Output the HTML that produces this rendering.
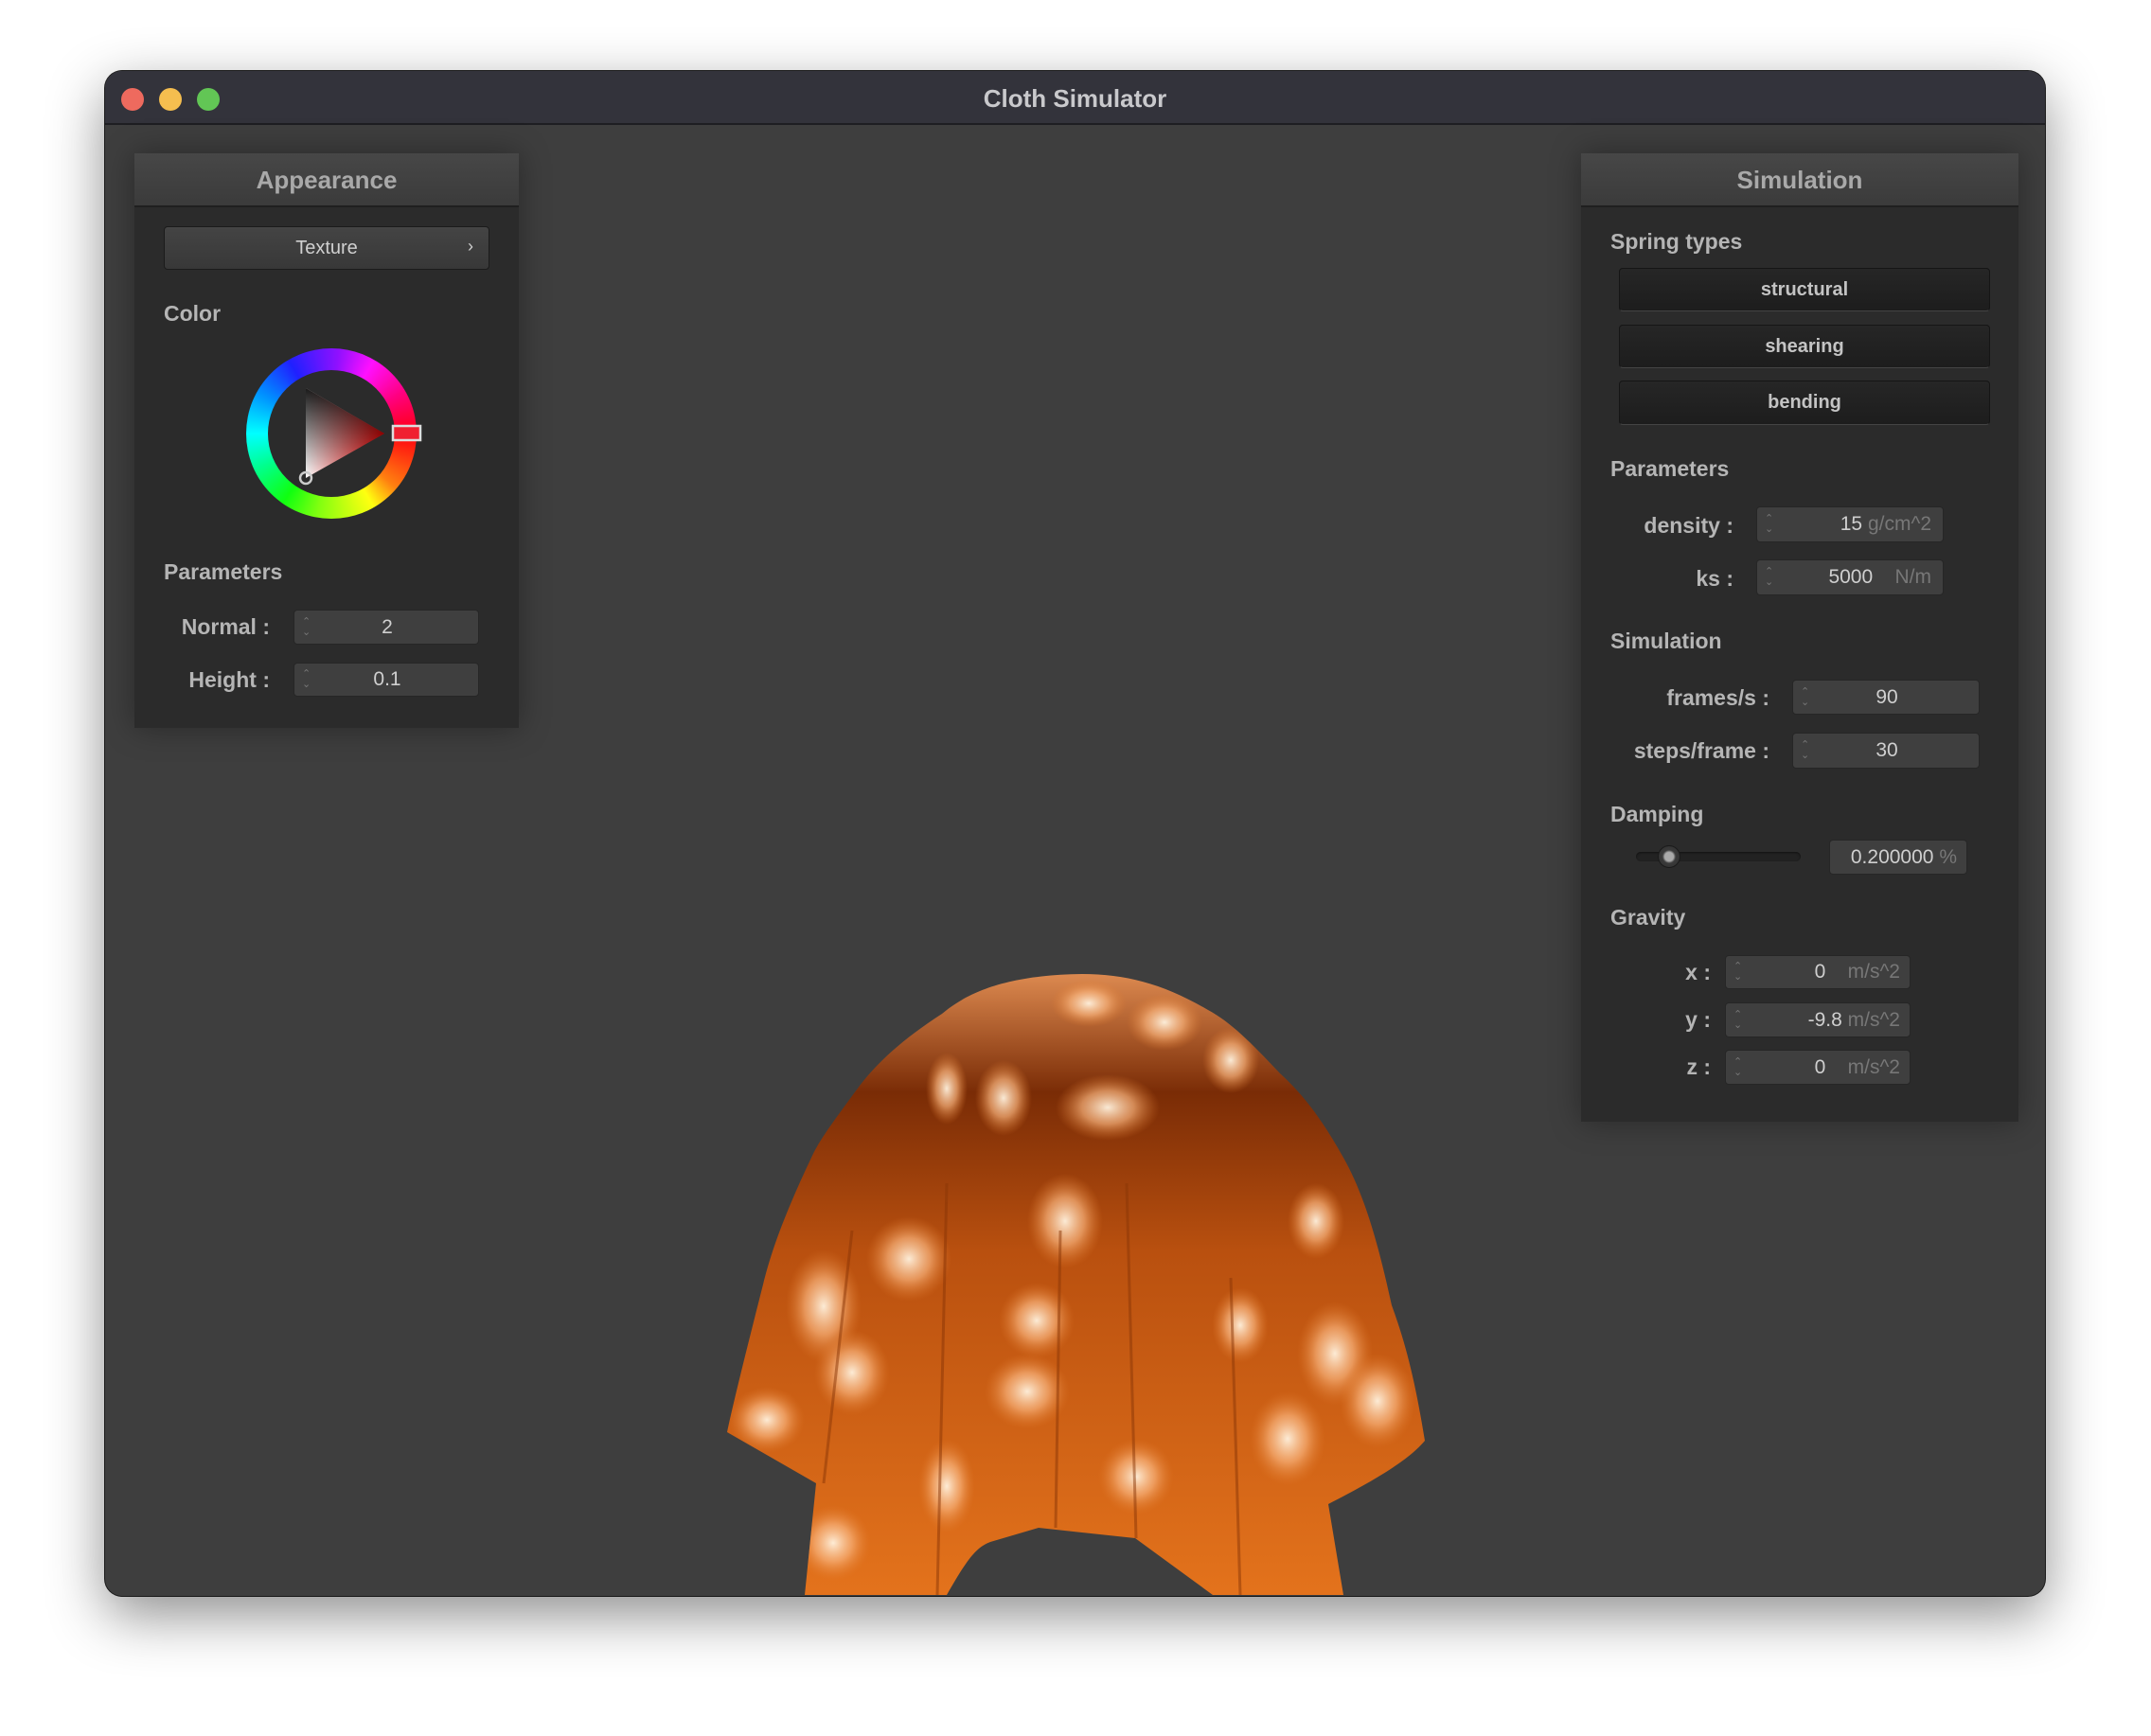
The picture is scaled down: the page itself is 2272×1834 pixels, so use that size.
<!DOCTYPE html>
<html><head><meta charset="utf-8"><style>
*{margin:0;padding:0;box-sizing:border-box}
body{width:2272px;height:1834px;background:#fff;position:relative;overflow:hidden;font-family:"Liberation Sans",sans-serif}
.win{position:absolute;left:111px;top:75px;width:2049px;height:1611px;border-radius:18px;background:#3e3e3e;overflow:hidden;box-shadow:0 20px 60px rgba(0,0,0,.45),0 0 0 1px #222}
.tb{position:absolute;left:0;top:0;width:100%;height:57px;background:#33333b;border-bottom:2px solid #1e1e22}
.tl{position:absolute;top:18px;width:24px;height:24px;border-radius:50%}
.title{position:absolute;left:0;width:100%;top:14px;text-align:center;color:#c9c9cc;font-weight:bold;font-size:26px}
.p{position:absolute;background:#2b2b2b;box-shadow:0 0 30px rgba(0,0,0,.35)}
.ph{position:absolute;left:0;top:0;width:100%;height:57px;background:linear-gradient(#474747,#3b3b3b);border-bottom:2px solid #1f1f1f;text-align:center;line-height:56px;font-size:26px;font-weight:bold;color:#a9a9a9}
.a{position:absolute}
.lab{position:absolute;font-size:23px;font-weight:bold;color:#b5b5b5}
.rl{position:absolute;font-size:23px;font-weight:bold;color:#b5b5b5;text-align:right}
.f{position:absolute;background:#3f3f3f;border:1px solid #262626;border-radius:4px;color:#cfcfcf;font-size:21px}
.f .s{position:absolute;left:8px;top:50%;transform:translateY(-50%);color:#777;font-size:11px;line-height:11px}
.f .v{position:absolute;top:50%;transform:translateY(-50%)}
.u{color:#777}
.btn{position:absolute;background:linear-gradient(#262626,#1d1d1d);border:1px solid #151515;border-bottom-color:#444;border-radius:4px;color:#c4c4c4;font-size:20px;font-weight:bold;text-align:center}
</style></head><body>
<div class="win">
 <div class="tb">
  <div class="tl" style="left:17px;background:#ee6a5e"></div>
  <div class="tl" style="left:57px;background:#f5be4f"></div>
  <div class="tl" style="left:97px;background:#62c655"></div>
  <div class="title">Cloth Simulator</div>
 </div>

 <svg class="a" style="left:0;top:0" width="2049" height="1611" viewBox="111 75 2049 1611">
  <defs>
   <linearGradient id="cg" x1="0" y1="0" x2="0" y2="1">
    <stop offset="0" stop-color="#e39055"/><stop offset=".2" stop-color="#7a2c06"/><stop offset=".45" stop-color="#b9500f"/><stop offset="1" stop-color="#e4731c"/>
   </linearGradient>
   <radialGradient id="bl"><stop offset="0" stop-color="#fff3e0" stop-opacity=".95"/><stop offset=".5" stop-color="#f8b27a" stop-opacity=".7"/><stop offset="1" stop-color="#e07a2c" stop-opacity="0"/></radialGradient>
   <clipPath id="cc"><path d="M1143 1029 C1060 1030 1020 1050 995 1071 C950 1100 925 1125 908 1147 C880 1185 865 1205 857 1223 C830 1280 815 1320 806 1357 C790 1420 775 1480 768 1513 L862 1567 L850 1685 L1000 1685 C1020 1650 1030 1635 1046 1629 L1097 1614 L1199 1625 L1281 1685 L1419 1685 L1403 1589 C1460 1560 1490 1540 1505 1522 C1495 1460 1485 1420 1470 1379 C1455 1310 1440 1260 1419 1223 C1395 1180 1375 1155 1352 1134 C1320 1100 1300 1080 1276 1067 C1230 1040 1190 1029 1143 1029Z"/></clipPath>
  </defs>
  <g clip-path="url(#cc)">
   <rect x="760" y="1020" width="760" height="670" fill="url(#cg)"/>
   <g fill="url(#bl)">
    <ellipse cx="1000" cy="1150" rx="22" ry="38"/><ellipse cx="1060" cy="1160" rx="30" ry="40"/><ellipse cx="1170" cy="1170" rx="55" ry="35"/>
    <ellipse cx="1230" cy="1080" rx="40" ry="30"/><ellipse cx="1150" cy="1060" rx="40" ry="25"/><ellipse cx="1300" cy="1120" rx="30" ry="35"/>
    <ellipse cx="1125" cy="1290" rx="40" ry="50"/><ellipse cx="960" cy="1330" rx="45" ry="45"/><ellipse cx="870" cy="1380" rx="40" ry="60"/>
    <ellipse cx="900" cy="1450" rx="40" ry="45"/><ellipse cx="1095" cy="1395" rx="40" ry="40"/><ellipse cx="1085" cy="1470" rx="45" ry="40"/>
    <ellipse cx="1410" cy="1430" rx="40" ry="55"/><ellipse cx="1455" cy="1480" rx="40" ry="50"/><ellipse cx="1360" cy="1520" rx="40" ry="50"/>
    <ellipse cx="810" cy="1500" rx="40" ry="35"/><ellipse cx="880" cy="1630" rx="40" ry="40"/><ellipse cx="1200" cy="1560" rx="40" ry="40"/>
    <ellipse cx="1000" cy="1570" rx="30" ry="50"/><ellipse cx="1310" cy="1400" rx="30" ry="40"/><ellipse cx="1390" cy="1290" rx="30" ry="40"/>
   </g>
   <g stroke="#8a3506" stroke-width="3" opacity=".5" fill="none">
    <path d="M1000 1250 L990 1685"/><path d="M1120 1300 L1115 1614"/><path d="M1190 1250 L1200 1625"/><path d="M1300 1350 L1310 1685"/><path d="M900 1300 L870 1567"/>
   </g>
  </g>
 </svg>

 <!-- Appearance panel -->
 <div class="p" style="left:31px;top:87px;width:406px;height:607px">
  <div class="ph">Appearance</div>
  <div class="btn" style="left:31px;top:77px;width:344px;height:46px;background:linear-gradient(#444,#383838);border:1px solid #1b1b1b;line-height:44px;font-weight:normal;color:#d0d0d0">Texture<span style="position:absolute;right:16px;top:-2px;font-size:18px">›</span></div>
  <div class="lab" style="left:31px;top:156px">Color</div>
  <div class="a" style="left:118px;top:206px;width:180px;height:180px;border-radius:50%;background:conic-gradient(from 90deg,#ff0010,#ff8010 40deg,#ffff10 60deg,#80ff10 100deg,#10ff10 125deg,#00ff90 155deg,#00ffff 180deg,#0090ff 210deg,#2020ff 240deg,#9010ff 275deg,#ff10ff 300deg,#ff0080 330deg,#ff0010)"></div>
  <div class="a" style="left:141px;top:229px;width:134px;height:134px;border-radius:50%;background:#2b2b2b"></div>
  <svg class="a" style="left:97px;top:185px" width="222" height="222" viewBox="-111 -111 222 222">
   <defs>
   <linearGradient id="t1" x1="0" y1="0" x2="1" y2="0"><stop offset="0" stop-color="#fff"/><stop offset="1" stop-color="#f00"/></linearGradient>
   <linearGradient id="t2" x1="0" y1="1" x2="0" y2="0"><stop offset="0" stop-color="#000" stop-opacity="0"/><stop offset="1" stop-color="#000"/></linearGradient></defs>
   <path d="M-27 -48L56 0L-27 47Z" fill="url(#t1)"/><path d="M-27 -48L56 0L-27 47Z" fill="url(#t2)" opacity=".9"/>
   <circle cx="-27" cy="47" r="6" fill="none" stroke="#ccc" stroke-width="2.5"/>
   <rect x="65" y="-8" width="29" height="15" fill="#f02030" stroke="#ddd" stroke-width="2.5"/>
  </svg>
  <div class="lab" style="left:31px;top:429px">Parameters</div>
  <div class="rl" style="right:263px;top:487px">Normal :</div>
  <div class="rl" style="right:263px;top:543px">Height :</div>
  <div class="f" style="left:168px;top:482px;width:196px;height:37px"><span class="s">⌃<br>⌄</span><span class="v" style="left:0;width:196px;text-align:center">2</span></div>
  <div class="f" style="left:168px;top:538px;width:196px;height:36px"><span class="s">⌃<br>⌄</span><span class="v" style="left:0;width:196px;text-align:center">0.1</span></div>
 </div>

 <!-- Simulation panel -->
 <div class="p" style="left:1559px;top:87px;width:462px;height:1023px">
  <div class="ph">Simulation</div>
  <div class="lab" style="left:31px;top:80px">Spring types</div>
  <div class="btn" style="left:40px;top:121px;width:392px;height:46px;line-height:44px">structural</div>
  <div class="btn" style="left:40px;top:181px;width:392px;height:46px;line-height:44px">shearing</div>
  <div class="btn" style="left:40px;top:240px;width:392px;height:47px;line-height:45px">bending</div>
  <div class="lab" style="left:31px;top:320px">Parameters</div>
  <div class="rl" style="right:301px;top:380px">density :</div>
  <div class="rl" style="right:301px;top:436px">ks :</div>
  <div class="f" style="left:185px;top:373px;width:198px;height:38px"><span class="s">⌃<br>⌄</span><span class="v" style="right:12px">15 <span class="u">g/cm^2</span></span></div>
  <div class="f" style="left:185px;top:429px;width:198px;height:38px"><span class="s">⌃<br>⌄</span><span class="v" style="right:12px">5000 &nbsp;&nbsp;&nbsp;<span class="u">N/m</span></span></div>
  <div class="lab" style="left:31px;top:502px">Simulation</div>
  <div class="rl" style="right:263px;top:562px">frames/s :</div>
  <div class="rl" style="right:263px;top:618px">steps/frame :</div>
  <div class="f" style="left:223px;top:556px;width:198px;height:37px"><span class="s">⌃<br>⌄</span><span class="v" style="left:0;width:198px;text-align:center">90</span></div>
  <div class="f" style="left:223px;top:612px;width:198px;height:38px"><span class="s">⌃<br>⌄</span><span class="v" style="left:0;width:198px;text-align:center">30</span></div>
  <div class="lab" style="left:31px;top:685px">Damping</div>
  <div class="a" style="left:58px;top:738px;width:174px;height:10px;border-radius:5px;background:#222;box-shadow:inset 0 1px 2px #111"></div>
  <div class="a" style="left:81px;top:731px;width:24px;height:24px;border-radius:50%;background:radial-gradient(#aaa 30%,#3a3a3a 45%,#2e2e2e);border:1px solid #1a1a1a"></div>
  <div class="f" style="left:262px;top:725px;width:146px;height:37px"><span class="v" style="right:10px">0.200000 <span class="u">%</span></span></div>
  <div class="lab" style="left:31px;top:794px">Gravity</div>
  <div class="rl" style="right:325px;top:852px">x :</div>
  <div class="rl" style="right:325px;top:902px">y :</div>
  <div class="rl" style="right:325px;top:952px">z :</div>
  <div class="f" style="left:152px;top:847px;width:196px;height:36px"><span class="s">⌃<br>⌄</span><span class="v" style="right:10px">0 &nbsp;&nbsp;&nbsp;<span class="u">m/s^2</span></span></div>
  <div class="f" style="left:152px;top:897px;width:196px;height:37px"><span class="s">⌃<br>⌄</span><span class="v" style="right:10px">-9.8 <span class="u">m/s^2</span></span></div>
  <div class="f" style="left:152px;top:947px;width:196px;height:37px"><span class="s">⌃<br>⌄</span><span class="v" style="right:10px">0 &nbsp;&nbsp;&nbsp;<span class="u">m/s^2</span></span></div>
 </div>
</div>
</body></html>
